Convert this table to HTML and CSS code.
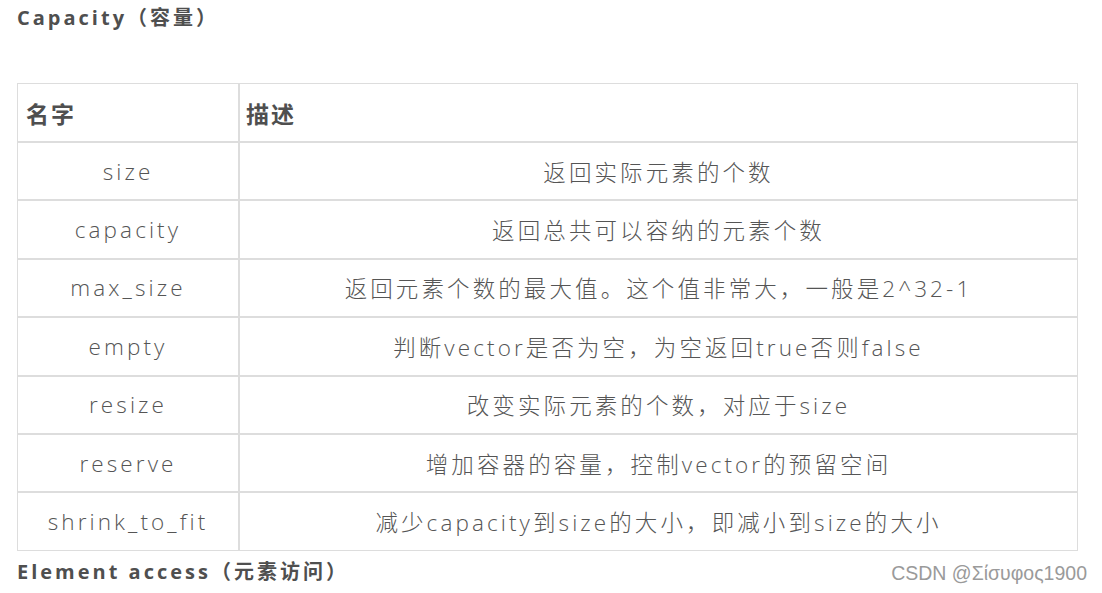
FILE: index.html
```html
<!DOCTYPE html>
<html lang="zh-CN">
<head>
<meta charset="utf-8">
<title>Capacity</title>
<link rel="stylesheet" href="styles.css">
</head>
<body>
<div class="page">
  <h3 class="section-title">Capacity（容量）</h3>
  <table class="api-table">
    <thead>
      <tr><th class="col-name">名字</th><th>描述</th></tr>
    </thead>
    <tbody>
      <tr><td>size</td><td>返回实际元素的个数</td></tr>
      <tr><td>capacity</td><td>返回总共可以容纳的元素个数</td></tr>
      <tr><td>max_size</td><td>返回元素个数的最大值。这个值非常大，一般是2^32-1</td></tr>
      <tr><td>empty</td><td>判断vector是否为空，为空返回true否则false</td></tr>
      <tr><td>resize</td><td>改变实际元素的个数，对应于size</td></tr>
      <tr><td>reserve</td><td>增加容器的容量，控制vector的预留空间</td></tr>
      <tr><td>shrink_to_fit</td><td>减少capacity到size的大小，即减小到size的大小</td></tr>
    </tbody>
  </table>
  <div class="footer-row">
    <h3 class="section-title next">Element access（元素访问）</h3>
    <span class="watermark">CSDN @Σίσυφος1900</span>
  </div>
</div>
</body>
</html>
```
FILE: styles.css
```css
html, body {
  margin: 0;
  padding: 0;
  background: #ffffff;
}
.page {
  padding: 0 15px 0 17px;
  font-family: "Open Sans", "Noto Sans CJK SC", sans-serif;
  color: #4d4d4d;
}
.section-title {
  margin: 0;
  font-size: 20px;
  font-weight: 700;
  letter-spacing: 3px;
  color: #4f4f4f;
  line-height: 36px;
}
.api-table {
  margin-top: 47px;
  width: 1061px;
  border-collapse: separate;
  border-spacing: 0;
  border: 1px solid #dddddd;
  font-size: 22.5px;
}
.api-table th {
  text-align: left;
  font-weight: 700;
  height: 57px;
  padding: 0 8px;
  border-bottom: 2px solid #dddddd;
  color: #4f4f4f;
  font-family: "Noto Sans CJK SC", sans-serif;
  font-size: 23px;
  letter-spacing: 2px;
}
.api-table th + th,
.api-table td + td {
  border-left: 2px solid #dddddd;
}
.api-table th + th {
  padding-left: 6px;
}
.api-table .col-name {
  width: 204px;
}
.api-table td {
  height: 56.4px;
  padding: 0 8px;
  text-align: center;
  font-weight: 300;
  letter-spacing: 3.1px;
  color: #555555;
}
.api-table tbody tr + tr td {
  border-top: 2px solid #dddddd;
}
.footer-row {
  display: flex;
  justify-content: space-between;
  align-items: center;
  height: 42px;
}
.watermark {
  font-family: "Liberation Sans", Arial, sans-serif;
  font-size: 19.5px;
  color: #9a9a9a;
  margin-top: 4px;
}
```
